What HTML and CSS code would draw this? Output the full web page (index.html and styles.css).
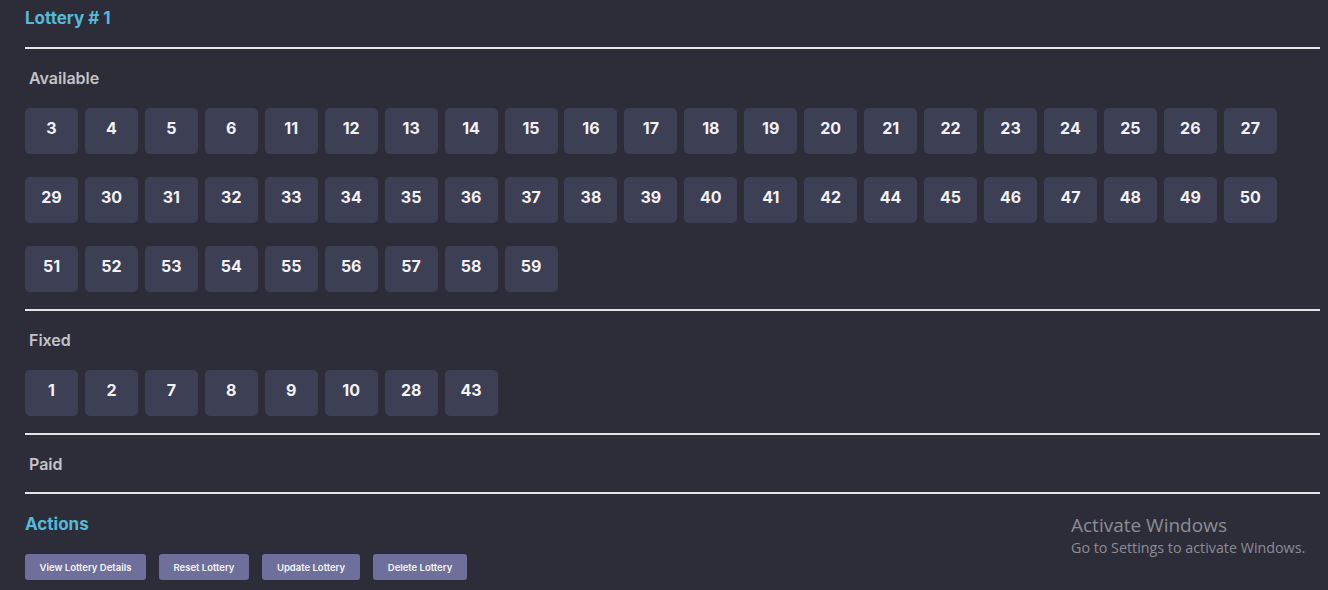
FILE: index.html
```html
<!DOCTYPE html>
<html>
<head>
<meta charset="utf-8">
<link rel="stylesheet" href="styles.css">
</head>
<body>
<div class="page">
  <h2 class="title">Lottery # 1</h2>
  <hr class="rule rule-top">
  <h3 class="label">Available</h3>
  <div class="tiles">
    <div class="tile">3</div><div class="tile">4</div><div class="tile">5</div><div class="tile">6</div><div class="tile">11</div><div class="tile">12</div><div class="tile">13</div><div class="tile">14</div><div class="tile">15</div><div class="tile">16</div><div class="tile">17</div><div class="tile">18</div><div class="tile">19</div><div class="tile">20</div><div class="tile">21</div><div class="tile">22</div><div class="tile">23</div><div class="tile">24</div><div class="tile">25</div><div class="tile">26</div><div class="tile">27</div>
    <div class="tile">29</div><div class="tile">30</div><div class="tile">31</div><div class="tile">32</div><div class="tile">33</div><div class="tile">34</div><div class="tile">35</div><div class="tile">36</div><div class="tile">37</div><div class="tile">38</div><div class="tile">39</div><div class="tile">40</div><div class="tile">41</div><div class="tile">42</div><div class="tile">44</div><div class="tile">45</div><div class="tile">46</div><div class="tile">47</div><div class="tile">48</div><div class="tile">49</div><div class="tile">50</div>
    <div class="tile">51</div><div class="tile">52</div><div class="tile">53</div><div class="tile">54</div><div class="tile">55</div><div class="tile">56</div><div class="tile">57</div><div class="tile">58</div><div class="tile">59</div>
  </div>
  <hr class="rule">
  <h3 class="label">Fixed</h3>
  <div class="tiles">
    <div class="tile">1</div><div class="tile">2</div><div class="tile">7</div><div class="tile">8</div><div class="tile">9</div><div class="tile">10</div><div class="tile">28</div><div class="tile">43</div>
  </div>
  <hr class="rule">
  <h3 class="label">Paid</h3>
  <hr class="rule rule-paid">
  <h2 class="title actions-title">Actions</h2>
  <div class="actions">
    <button class="btn btn-view">View Lottery Details</button>
    <button class="btn btn-reset">Reset Lottery</button>
    <button class="btn btn-update">Update Lottery</button>
    <button class="btn btn-delete">Delete Lottery</button>
  </div>
</div>
<div class="watermark">
  <div class="wm-title">Activate Windows</div>
  <div class="wm-sub">Go to Settings to activate Windows.</div>
</div>
</body>
</html>
```

FILE: styles.css
```css
html, body {
  margin: 0;
  padding: 0;
  background: #2d2d3a;
  height: 100%;
  overflow: hidden;
}
body {
  font-family: Inter, "Noto Sans", sans-serif;
}
.page {
  display: flex;
  flex-direction: column;
  padding: 8px 8px 0 25px;
}
.title {
  margin: 0;
  font-size: 17px;
  line-height: 20px;
  font-weight: 700;
  color: #55b9d8;
}
.rule {
  border: none;
  height: 2px;
  background: #e4e4e8;
  margin: 17px 0 0 0;
  width: 100%;
}
.rule-top {
  margin-top: 19px;
}
.label {
  margin: 19px 0 0 4px;
  font-size: 16px;
  line-height: 20px;
  font-weight: 600;
  color: #c3c4c8;
}
.tiles {
  margin-top: 20px;
  display: flex;
  flex-wrap: wrap;
  column-gap: 6.95px;
  row-gap: 23px;
  max-width: 1260px;
}
.tile {
  width: 53px;
  height: 46px;
  box-sizing: border-box;
  padding-bottom: 6px;
  border-radius: 5px;
  background: #3d3f55;
  color: #f2f2f6;
  font-size: 16px;
  font-weight: 700;
  display: flex;
  align-items: center;
  justify-content: center;
}
.rule-paid {
  margin-top: 18px;
}
.actions-title {
  margin-top: 20px;
}
.actions {
  margin-top: 20px;
  display: flex;
  gap: 13px;
}
.btn {
  height: 26px;
  border: none;
  border-radius: 3px;
  background: #6e6f9a;
  color: #f4f4f8;
  font-family: Inter, "Noto Sans", sans-serif;
  font-size: 9.5px;
  font-weight: 600;
  padding: 0;
}
.btn-view { width: 121px; }
.btn-reset { width: 90px; }
.btn-update { width: 98px; }
.btn-delete { width: 94px; }
.watermark {
  position: absolute;
  left: 1071px;
  top: 513px;
  font-family: "Open Sans", "Noto Sans", sans-serif;
  color: #8c8c95;
}
.wm-title {
  font-size: 19px;
  line-height: 25px;
}
.wm-sub {
  font-size: 14.3px;
  line-height: 20px;
}
```
